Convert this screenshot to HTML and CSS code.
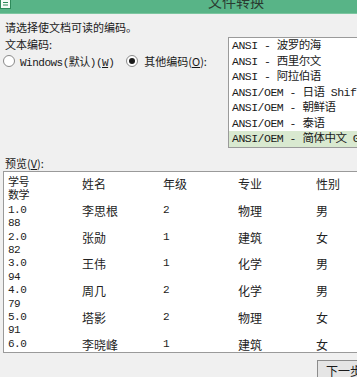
FILE: index.html
```html
<!DOCTYPE html>
<html lang="zh-CN">
<head>
    <meta charset="UTF-8">
    <title>文件转换</title>
    <link rel="stylesheet" href="styles.css">
</head>
<body>
    <div class="titlebar">
        <svg class="app-icon" width="12" height="9" viewBox="0 0 12 9">
            <rect x="0.5" y="-1" width="10" height="9.5" fill="#f4fbf6" stroke="#2e8a5a"/>
            <line x1="3" y1="2.5" x2="8" y2="2.5" stroke="#2e8a5a"/>
            <line x1="3" y1="5" x2="8" y2="5" stroke="#2e8a5a"/>
        </svg>
        <span class="title">文件转换</span>
    </div>

    <div class="top">
        <div class="options">
            <p class="hint">请选择使文档可读的编码。</p>
            <p class="label">文本编码:</p>
            <div class="radio-row">
                <span class="radio"></span>
                <span class="mono">Windows(默认)(<u>W</u>)</span>
                <span class="radio checked"></span>
                <span class="other">其他编码(<u>O</u>):</span>
            </div>
        </div>
        <ul class="encodings">
            <li>ANSI - 波罗的海</li>
            <li>ANSI - 西里尔文</li>
            <li>ANSI - 阿拉伯语</li>
            <li>ANSI/OEM - 日语 Shift-JIS</li>
            <li>ANSI/OEM - 朝鲜语</li>
            <li>ANSI/OEM - 泰语</li>
            <li class="selected">ANSI/OEM - 简体中文 GB2312</li>
        </ul>
    </div>

    <p class="label preview-label">预览(<u>V</u>):</p>
    <div class="preview">
        <div class="table">
            <div class="num">学号<br>数学</div><div>姓名</div><div>年级</div><div>专业</div><div>性别</div>
            <div class="num">1.0<br>88</div><div>李思根</div><div class="num">2</div><div>物理</div><div>男</div>
            <div class="num">2.0<br>82</div><div>张勋</div><div class="num">1</div><div>建筑</div><div>女</div>
            <div class="num">3.0<br>94</div><div>王伟</div><div class="num">1</div><div>化学</div><div>男</div>
            <div class="num">4.0<br>79</div><div>周几</div><div class="num">2</div><div>化学</div><div>男</div>
            <div class="num">5.0<br>91</div><div>塔影</div><div class="num">2</div><div>物理</div><div>女</div>
            <div class="num">6.0</div><div>李晓峰</div><div class="num">1</div><div>建筑</div><div>女</div>
        </div>
    </div>

    <div class="actions">
        <button class="next">下一步</button>
    </div>
</body>
</html>
```

FILE: styles.css
```css
body {
    margin: 0;
    background-color: #f0f0f0;
    font-family: "Noto Sans CJK SC", sans-serif;
    font-size: 11px;
    color: #1a1a1a;
    overflow: hidden;
    width: 357px;
    height: 377px;
}

p {
    margin: 0;
}

.titlebar {
    height: 14px;
    background-color: #58b487;
    border-bottom: 1px solid #7cc6a0;
    display: flex;
    overflow: hidden;
    box-sizing: border-box;
}

.app-icon {
    display: block;
}

.title {
    margin-left: 196px;
    margin-top: -9px;
    font-size: 14px;
    line-height: 20px;
    color: #2a3a30;
}

.top {
    display: flex;
    align-items: flex-start;
}

.options {
    flex: 0 0 228px;
    padding-left: 5px;
    padding-top: 5px;
    box-sizing: border-box;
}

.hint {
    line-height: 17px;
}

.label {
    line-height: 16px;
}

.radio-row {
    display: flex;
    align-items: center;
    margin-left: -2px;
    height: 17px;
    white-space: nowrap;
}

.radio {
    flex: 0 0 12px;
    height: 12px;
    border: 1px solid #8a8a8a;
    border-radius: 50%;
    background-color: #fff;
    box-sizing: border-box;
    display: flex;
    align-items: center;
    justify-content: center;
}

.radio.checked::after {
    content: "";
    width: 6px;
    height: 6px;
    border-radius: 50%;
    background-color: #1a1a1a;
}

.mono,
.num,
.encodings {
    font-family: "Liberation Mono", "Noto Sans CJK SC", monospace;
    letter-spacing: -0.5px;
}

.mono {
    margin-left: 5px;
    font-size: 11px;
    margin-right: 12px;
}

.other {
    margin-left: 6px;
}

.encodings {
    flex: 0 0 150px;
    list-style: none;
    margin: 23px 0 0;
    padding: 0;
    height: 111px;
    background-color: #fff;
    border: 1px solid #9a9a9a;
    box-sizing: border-box;
    font-size: 11.5px;
    white-space: nowrap;
    overflow: hidden;
}

.encodings li {
    line-height: 15.5px;
    padding-left: 3px;
}

.encodings li.selected {
    background-color: #d9e9d0;
}

.preview-label {
    margin-top: 7px;
    padding-left: 5px;
}

.preview {
    margin-left: 3px;
    width: 380px;
    height: 182px;
    background-color: #fff;
    border: 1px solid #9a9a9a;
    box-sizing: border-box;
    overflow: hidden;
    padding: 5px 0 0 4px;
}

.table {
    display: grid;
    grid-template-columns: 74px 81px 75px 78px 60px;
    align-items: start;
    font-size: 12px;
    line-height: 13.4px;
    color: #222;
}

.num {
    font-size: 11px;
}

.actions {
    padding-left: 317px;
    margin-top: 7px;
}

.next {
    width: 60px;
    height: 20px;
    margin: 0;
    padding: 0 0 0 8px;
    text-align: left;
    font-family: "Noto Sans CJK SC", sans-serif;
    font-size: 12px;
    color: #1a1a1a;
    background-color: #e5e5e5;
    border: 1px solid #8c8c8c;
}
```
